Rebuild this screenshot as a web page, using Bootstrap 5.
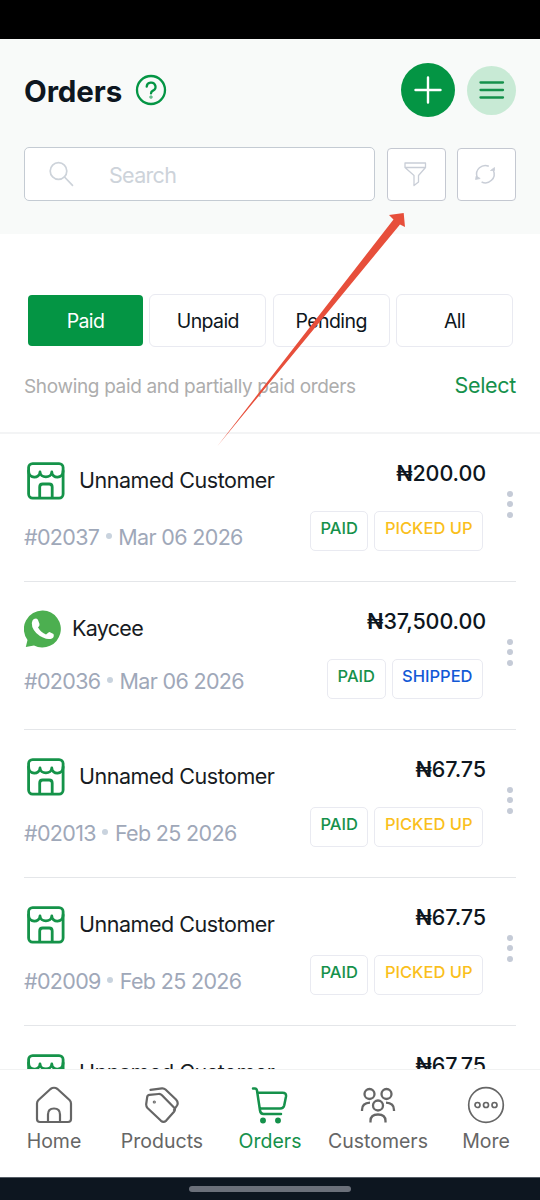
<!DOCTYPE html>
<html lang="en">
<head>
<meta charset="utf-8">
<meta name="viewport" content="width=device-width, initial-scale=1">
<title>Orders</title>
<link href="https://cdn.jsdelivr.net/npm/bootstrap@5.3.0/dist/css/bootstrap.min.css" rel="stylesheet">
<style>
:root{--green:#049544;--ink:#0d1620;--line:#e9eaf1}
body{font-family:Inter,"Liberation Sans",sans-serif;color:var(--ink);background:#fff}
.screen{width:540px;height:1200px}
.statusbar{height:39px;background:#000}
.top{height:195px;background:#f8faf9;padding:24px 24px 0}
.title-row{height:54px}
.page-title{font-size:29.5px;font-weight:700;line-height:54px;letter-spacing:-.1px;padding-top:1px}
.help{margin-left:13px}
.fab{width:54px;height:54px;background:var(--green);margin-right:12.500px}
.menu-btn{width:49px;height:49px;background:#c8ead5}
.search-row{margin-top:30px;height:54px}
.searchbox{width:351px;height:54px;border:1px solid #c4cbd3;border-radius:5px;padding-left:24px;background:#fff}
.searchbox span{font-size:21.5px;color:#cdd3da;margin-left:34px;letter-spacing:-.7px;padding-top:2px}
.tool{width:59px;height:53px;border:1px solid #c4c8d1;border-radius:4px;background:#fff;color:#c9ced7}
.filters{margin-top:60px;padding:0 27px 0 28px;height:53px}
.tab{width:117px;height:53px;border:1px solid var(--line);border-radius:6px;font-size:19.5px;line-height:1;background:#fff;letter-spacing:-.6px;padding-top:2px}
.tab.on{width:115px;height:51px;background:var(--green);border:0;color:#fff;letter-spacing:-.7px;border-radius:4px}
.hint{height:87px;border-bottom:2px solid #f3f4f5;padding:0 24px}
.hint p{font-size:19px;line-height:79px;color:#adadad;letter-spacing:-.34px}
.hint a{font-size:21.5px;line-height:77px;color:#15914b;letter-spacing:-.3px}
.orders{height:635px}
.order{height:148px;margin:0 24px;border-bottom:1px solid #e4e6e9}
.who{padding-top:29px}
.name{font-size:21.5px;line-height:35px;color:#171b22;letter-spacing:-.47px;height:38px}
.ico{position:relative;top:-1px}
.shop-ico{margin:0 14px 0 3px}
.wa-ico{margin-right:10px}
.meta{font-size:21.5px;line-height:30px;color:#9fa8b9;margin-top:21px;letter-spacing:-.66px}
.wa .name{letter-spacing:-.7px}
.wa .meta{margin-top:17px}
.dot{width:6px;height:6px;background:#c9d3de;margin:0 6.500px 2px 6.500px}
.right{padding-top:23px}
.amount{font-size:21.5px;line-height:32px;font-weight:500;letter-spacing:-.1px}
.naira{font-weight:600}
.tags{margin:22px 3px 0 0;gap:6px}
.tagbox{height:40px;border:1px solid var(--line);border-radius:5px;font-size:16.5px;font-weight:500;line-height:33px;padding:0 9.500px}
.paid{color:#15914b}.picked{color:#fabf1c}.shipped{color:#1259d6}
.kebab{width:6px;margin:56.500px 3px 0 21px;gap:4.500px}
.kebab i{width:6px;height:6px;background:#c5cbd7}
.tabbar{height:108px;background:#fff;border-top:1px solid #f1f2f2;color:#666;position:relative}
.tabbar a{width:108px;color:inherit;padding-top:16px;font-size:19.5px}
.tabbar a.on{color:#15914b}
.tabbar span{line-height:26px;margin-top:4px}
.gesture{height:23px;background:#0d1620;border-top:1px solid #555d66}
.gesture i{width:162px;height:6px;background:#6b707a}
.pointer{position:absolute;left:210px;top:205px}
</style>
</head>
<body>
<svg width="0" height="0" class="position-absolute">
<symbol id="shop" viewBox="0 0 38 38"><g fill="none" stroke="#159349" stroke-width="2.8" stroke-linejoin="round" stroke-linecap="round"><rect x="1.600" y="1.600" width="34.500" height="34.500" rx="4"/><path d="M1.600 9C1.600 17 12.700 17 13 10C13.300 16.500 24.500 16.500 24.800 10C25 17 36.100 17 36.100 9M12.700 35.500V25q0-3 3-3h6.500q3 0 3 3v10.500"/></g></symbol>
</svg>
<div class="screen d-flex flex-column position-relative overflow-hidden">
<div class="statusbar flex-shrink-0"></div>
<header class="top flex-shrink-0">
<div class="title-row d-flex align-items-center">
<h1 class="page-title m-0">Orders</h1>
<svg class="help" width="32" height="32" viewBox="0 0 32 32" fill="none" stroke="#049544" stroke-width="2.300" stroke-linecap="round"><circle cx="16" cy="16" r="14"/><path d="M11.700 12.600a4.400 4.200 0 1 1 6.300 4q-2 1-2 2.800"/><circle cx="16" cy="23" r=".4"/></svg>
<div class="fab rounded-circle ms-auto d-flex align-items-center justify-content-center"><svg width="28" height="28" stroke="#fff" stroke-width="2.400" stroke-linecap="round"><path d="M14 1.500v25M1.500 14h25"/></svg></div>
<div class="menu-btn rounded-circle d-flex align-items-center justify-content-center"><svg width="26" height="20" stroke="#15914b" stroke-width="2.300" stroke-linecap="round"><path d="M1.500 2.500h22.500M1.500 10h22.500M1.500 17.500h22.500"/></svg></div>
</div>
<div class="search-row d-flex align-items-center justify-content-between">
<div class="searchbox d-flex align-items-center"><svg width="26" height="26" fill="none" stroke="#cdd3da" stroke-width="1.700" stroke-linecap="round"><circle cx="9.500" cy="10" r="8.300"/><path d="M15.500 16l8 8.300"/></svg><span>Search</span></div>
<div class="tool d-flex align-items-center justify-content-center"><svg width="24" height="26" fill="none" stroke="currentColor" stroke-width="1.300" stroke-linejoin="round"><path d="M1 2h20.500v4.500l-7 8V21l-4.500 3.500V14.500L1 6.500zM1 6.500h20.500"/></svg></div>
<div class="tool d-flex align-items-center justify-content-center"><svg width="26" height="24" fill="none" stroke="currentColor" stroke-width="1.500"><path d="M3 15A8.800 8.800 0 0 1 14.800 4.200M19.400 8.500A8.800 8.800 0 0 1 7.600 20"/><path d="M16.500 8.500h4V5.500zM1.500 17.500l.7-3.500 4 2.500z" fill="currentColor" stroke-width=".8"/></svg></div>
</div>
</header>
<div class="filters d-flex align-items-center justify-content-between flex-shrink-0">
<div class="tab on d-flex align-items-center justify-content-center">Paid</div>
<div class="tab d-flex align-items-center justify-content-center">Unpaid</div>
<div class="tab d-flex align-items-center justify-content-center">Pending</div>
<div class="tab d-flex align-items-center justify-content-center">All</div>
</div>
<div class="hint d-flex justify-content-between flex-shrink-0"><p class="m-0">Showing paid and partially paid orders</p><a href="#" class="text-decoration-none">Select</a></div>
<main class="orders overflow-hidden flex-shrink-0" id="orders"></main>
<nav class="tabbar d-flex flex-shrink-0">
<a href="#" class="text-decoration-none d-flex flex-column align-items-center"><svg width="38" height="38" fill="none" stroke="currentColor" stroke-width="2.200" stroke-linejoin="round"><path d="M2 17.500q0-2 1.500-3.500L15.500 3Q19 .5 22.500 3L34.500 14Q36 15.500 36 17.500V33q0 3-3 3H5q-3 0-3-3zM13 36V28.500q0-6 6-6t6 6V36"/></svg><span>Home</span></a>
<a href="#" class="text-decoration-none d-flex flex-column align-items-center"><svg width="38" height="38" fill="none" stroke="currentColor" stroke-width="2.200" stroke-linejoin="round" stroke-linecap="round"><path d="M4.200 11Q4.500 9 6.500 8.800L15.500 8q2-.2 3.500 1.200L31 21.500q1.800 2 0 4.200L23 34.800q-2.500 2.200-5 0L4.500 22Q3 20.300 3.200 18zM7.500 3.800L19 2.300q2-.2 3.500 1.200L33 13.500q2.800 3 1 6l-3 4.500"/><circle cx="11.300" cy="16" r=".5" fill="currentColor"/></svg><span>Products</span></a>
<a href="#" class="on text-decoration-none d-flex flex-column align-items-center"><svg width="38" height="38" fill="none" stroke="currentColor" stroke-width="2.500" stroke-linejoin="round" stroke-linecap="round"><path d="M2 2.500h2q1.500 0 2 2l3 20q.5 3.500 3.500 3.500H30M7 6.800h24.500q4 0 3.500 3.700l-1.800 9q-.8 3-4 3H10"/><circle cx="12" cy="34.500" r="1.700" fill="currentColor"/><circle cx="27" cy="34.500" r="1.700" fill="currentColor"/></svg><span>Orders</span></a>
<a href="#" class="text-decoration-none d-flex flex-column align-items-center"><svg width="38" height="38" fill="none" stroke="currentColor" stroke-width="2.300"><circle cx="10.500" cy="8" r="5"/><circle cx="27.500" cy="8" r="5"/><circle cx="19" cy="19.500" r="5"/><path d="M3 25v-1q0-7 8-7.300M35 25v-1q0-7-8-7.300M11.500 36.500V35q0-6.500 7.500-6.500t7.500 6.500v1.500"/></svg><span>Customers</span></a>
<a href="#" class="text-decoration-none d-flex flex-column align-items-center"><svg width="38" height="38" fill="none" stroke="currentColor" stroke-width="1.700"><circle cx="19" cy="19" r="17.300"/><circle cx="10.500" cy="19" r="2.500"/><circle cx="19" cy="19" r="2.500"/><circle cx="27.500" cy="19" r="2.500"/></svg><span>More</span></a>
</nav>
<div class="gesture d-flex align-items-center justify-content-center flex-shrink-0"><i class="rounded-pill"></i></div>
<svg class="pointer" width="205" height="245"><path d="M7.500 241L183.500 14.500L179 10L193.700 8L195 22L190 19.500z" fill="#e74f3b"/></svg>
</div>
<script src="https://cdn.jsdelivr.net/npm/bootstrap@5.3.0/dist/js/bootstrap.bundle.min.js"></script>
<script>
const shop = '<svg class="ico shop-ico" width="38" height="38"><use href="#shop"/></svg>';
const wa = '<svg class="ico wa-ico" width="38" height="38" viewBox="0 0 38 38"><path d="M19 .5a18.500 18.500 0 1 1-9 35L1.800 37 3.500 30A18.500 18.500 0 0 1 19 .5z" fill="#4caf50"/><path d="M8.500 10.500q1-2 3.500-2 1.500 0 2 1.500l1.500 4q.4 1.500-1.500 3.500 3 5 8 7l2.500-2q1-.8 2 0l3 1.500q1 3-1.500 4.500-4 1.500-9-1Q11 24 8.300 17q-1.300-4 .2-6.500z" fill="#fff"/></svg>';
const rows = [
  ['Unnamed Customer', '#02037', 'Mar 06 2026', '200.00', true],
  ['Kaycee', '#02036', 'Mar 06 2026', '37,500.00', false],
  ['Unnamed Customer', '#02013', 'Feb 25 2026', '67.75', true],
  ['Unnamed Customer', '#02009', 'Feb 25 2026', '67.75', true],
  ['Unnamed Customer', '', '', '67.75', true]
];
rows.forEach(([name, id, date, amount, store]) => {
  const meta = id ? `<div class="meta d-flex align-items-center"><span>${id}</span><i class="dot rounded-circle"></i><span>${date}</span></div>` : '';
  const tags = id ? `<div class="tags d-flex"><div class="tagbox paid">PAID</div><div class="tagbox ${store ? 'picked' : 'shipped'}">${store ? 'PICKED UP' : 'SHIPPED'}</div></div>` : '';
  document.getElementById('orders').insertAdjacentHTML('beforeend', `<div class="order d-flex ${store ? '' : 'wa'}"><div class="who"><div class="name d-flex">${store ? shop : wa}<span>${name}</span></div>${meta}</div><div class="right ms-auto d-flex flex-column align-items-end"><div class="amount"><span class="naira">₦</span>${amount}</div>${tags}</div><div class="kebab d-flex flex-column"><i class="rounded-circle"></i><i class="rounded-circle"></i><i class="rounded-circle"></i></div></div>`);
});
</script>
</body>
</html>
